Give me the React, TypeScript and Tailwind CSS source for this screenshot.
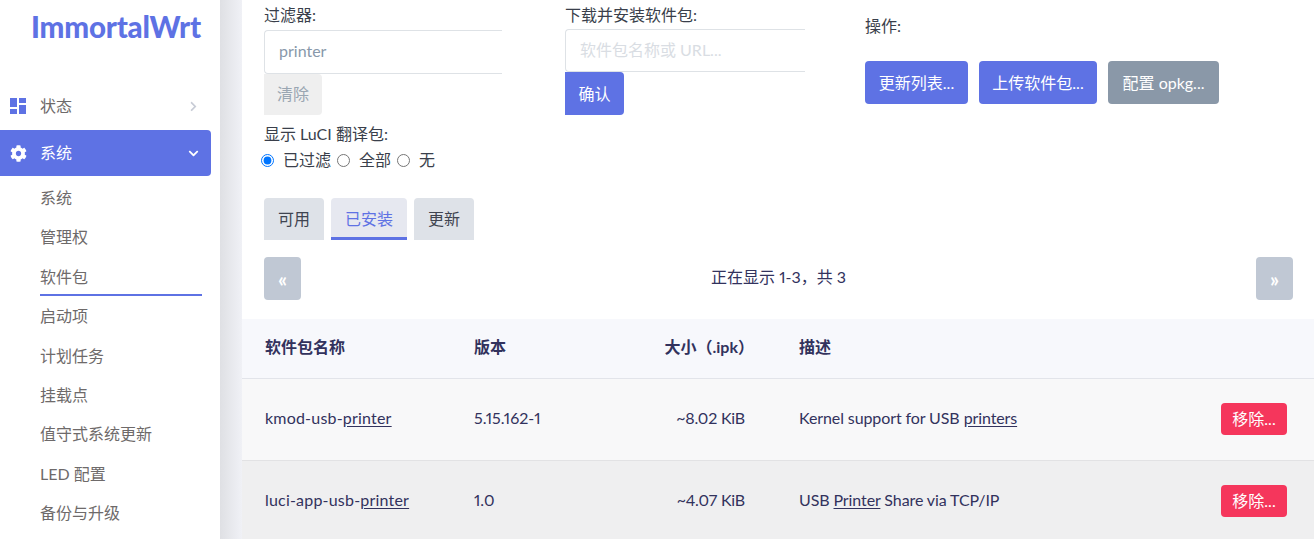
import React from 'react';
import { FaChevronRight, FaChevronDown, FaCog } from 'react-icons/fa';

const font = { fontFamily: '"Lato", "Noto Sans CJK SC", sans-serif' };

const subItems = ['系统', '管理权', '软件包', '启动项', '计划任务', '挂载点', '值守式系统更新', 'LED 配置', '备份与升级'];

const Sidebar = () => (
  <aside className="w-[220px] shrink-0 h-[539px] overflow-hidden bg-white text-[#6e6a6a] text-[16px]">
    <div className="h-[86px] pt-[9px] pl-[31px] text-[#5e72e4] text-[29.5px] leading-[36px] font-black whitespace-nowrap tracking-[-0.2px]">
      ImmortalWrt
    </div>
    <div className="h-[40px] mb-[4px] flex items-center pl-[10px] pr-[21px]">
      <svg viewBox="0 0 16 16" className="w-[16px] h-[16px] fill-[#5e72e4]">
        <rect x="0" y="0" width="7" height="9" />
        <rect x="9" y="0" width="7" height="5" />
        <rect x="0" y="11" width="7" height="5" />
        <rect x="9" y="7" width="7" height="9" />
      </svg>
      <span className="ml-[14px] flex-1 pb-[1px]">状态</span>
      <FaChevronRight className="w-[11px] h-[11px] text-[#c8ccd6]" />
    </div>
    <div className="h-[46px] w-[211px] flex items-center pl-[10px] pr-[12px] bg-[#5e72e4] rounded-r-[4px] text-white">
      <FaCog className="w-[17px] h-[17px]" />
      <span className="ml-[13px] flex-1">系统</span>
      <FaChevronDown className="w-[11px] h-[11px]" />
    </div>
    <ul className="pl-[40px] w-[202px] mt-[2px]">
      {subItems.map((item) => (
        <li
          key={item}
          className={`h-[39.4px] leading-[39px] whitespace-nowrap ${item === '软件包' ? 'border-b-2 border-[#5e72e4]' : ''}`}
        >
          {item}
        </li>
      ))}
    </ul>
  </aside>
);

const ActionButton = ({ children, gray, width }: { children: React.ReactNode; gray?: boolean; width: string }) => (
  <button className={`h-[43px] rounded-[4px] text-white text-[16px] whitespace-nowrap ${width} ${gray ? 'bg-[#8a98a8]' : 'bg-[#5e72e4]'}`}>
    {children}
  </button>
);

const FilterRow = () => (
  <div className="flex h-[198px] pl-[22px]">
    <div className="w-[301px] shrink-0">
      <div className="h-[30px] leading-[30px]">过滤器:</div>
      <div className="w-[238px] h-[44px] border border-r-0 border-[#dee2e6] rounded-l-[4px] pl-[14px] leading-[40px] text-[#8898aa]">
        printer
      </div>
      <button className="block w-[58px] h-[41px] pb-[2px] bg-[#efefef] rounded-r-[4px] text-[#9aa6b2]">清除</button>
      <div className="h-[26px] leading-[26px] mt-[6px] whitespace-nowrap">显示 LuCI 翻译包:</div>
      <div className="flex items-center h-[26px] -ml-[6px] whitespace-nowrap">
        <input type="radio" name="i18n" defaultChecked className="w-[13px] h-[13px] mx-[3px]" />
        <span className="ml-[6px]">已过滤</span>
        <input type="radio" name="i18n" className="w-[13px] h-[13px] ml-[6px] mr-[3px]" />
        <span className="ml-[6px]">全部</span>
        <input type="radio" name="i18n" className="w-[13px] h-[13px] ml-[6px] mr-[3px]" />
        <span className="ml-[6px]">无</span>
      </div>
    </div>
    <div className="w-[300px] shrink-0">
      <div className="h-[29px] leading-[30px]">下载并安装软件包:</div>
      <div className="w-[240px] h-[43px] border border-r-0 border-[#dee2e6] rounded-l-[4px] pl-[14px] leading-[39px] text-[#d9dde3] whitespace-nowrap">
        软件包名称或 URL...
      </div>
      <button className="block w-[59px] h-[43px] bg-[#5e72e4] rounded-r-[4px] text-white">确认</button>
    </div>
    <div className="flex-1">
      <div className="h-[61px] pt-[12px] leading-[28px]">操作:</div>
      <div className="flex gap-[11px]">
        <ActionButton width="w-[103px]">更新列表...</ActionButton>
        <ActionButton width="w-[118px]">上传软件包...</ActionButton>
        <ActionButton width="w-[111px]" gray>配置 opkg...</ActionButton>
      </div>
    </div>
  </div>
);

const Tabs = () => (
  <div className="flex gap-[7px] pl-[22px] h-[42px]">
    <div className="w-[60px] bg-[#dee2e8] rounded-t-[4px] text-center leading-[42px] text-[#3f4450]">可用</div>
    <div className="w-[76px] bg-[#e6e8f0] rounded-t-[4px] text-center leading-[42px] text-[#5e72e4] border-b-[3px] border-[#5e72e4]">已安装</div>
    <div className="w-[60px] bg-[#dee2e8] rounded-t-[4px] text-center leading-[42px] text-[#3f4450]">更新</div>
  </div>
);

const Pager = () => (
  <div className="flex items-center justify-between pl-[22px] pr-[21px] mt-[17px] h-[43px]">
    <button className="w-[37px] h-[43px] rounded-[4px] bg-[#c0c8d4] text-white text-[20px] font-bold">«</button>
    <span className="text-[#32325d] pb-[3px] proportional-nums">正在显示 1-3，共 3</span>
    <button className="w-[37px] h-[43px] rounded-[4px] bg-[#c0c8d4] text-white text-[20px] font-bold">»</button>
  </div>
);

const cols = 'grid grid-cols-[209px_120px_151px_1fr] items-center pl-[23px] pr-[27px] proportional-nums';

const Mark = ({ children }: { children: React.ReactNode }) => <span className="underline underline-offset-2">{children}</span>;

const Row = ({ name, version, size, desc, className }: { name: React.ReactNode; version: string; size: string; desc: React.ReactNode; className: string }) => (
  <div className={`${cols} ${className}`}>
    <div className="pb-[2px] tracking-[0.2px]">{name}</div>
    <div className="pb-[2px]">{version}</div>
    <div className="text-right pb-[2px] tracking-[-0.2px]">{size}</div>
    <div className="pl-[54px] flex items-center justify-between">
      <span className="pb-[2px] tracking-[-0.1px]">{desc}</span>
      <button className="w-[66px] h-[32px] rounded-[4px] bg-[#f5365c] text-white text-[16px]">移除...</button>
    </div>
  </div>
);

const PackageTable = () => (
  <div className="mt-[19px] text-[#32325d]">
    <div className={`${cols} h-[60px] bg-[#f7f8fc] border-b border-[#e2e4ea] font-bold`}>
      <div className="pb-[3px]">软件包名称</div>
      <div className="pb-[3px]">版本</div>
      <div className="text-right pb-[3px] -mr-[9px]">大小（.ipk）</div>
      <div className="pl-[54px] pb-[3px]">描述</div>
    </div>
    <Row
      className="h-[82px] pb-[1px] bg-[#f8f8f9] border-b border-[#e2e2e4]"
      name={<>kmod-usb-<Mark>printer</Mark></>}
      version="5.15.162-1"
      size="~8.02 KiB"
      desc={<>Kernel support for USB <Mark>printers</Mark></>}
    />
    <Row
      className="h-[80px] bg-[#efeff0]"
      name={<>luci-app-usb-<Mark>printer</Mark></>}
      version="1.0"
      size="~4.07 KiB"
      desc={<>USB <Mark>Printer</Mark> Share via TCP/IP</>}
    />
  </div>
);

export default function App() {
  return (
    <div className="flex h-[539px] w-[1314px] overflow-hidden bg-white text-[16px] text-[#3a3f4b]" style={font}>
      <Sidebar />
      <div className="w-[22px] shrink-0 bg-gradient-to-r from-[#dfe0e4] to-[#f0f1f6]" />
      <main className="flex-1 min-w-0 bg-white">
        <FilterRow />
        <Tabs />
        <Pager />
        <PackageTable />
      </main>
    </div>
  );
}
